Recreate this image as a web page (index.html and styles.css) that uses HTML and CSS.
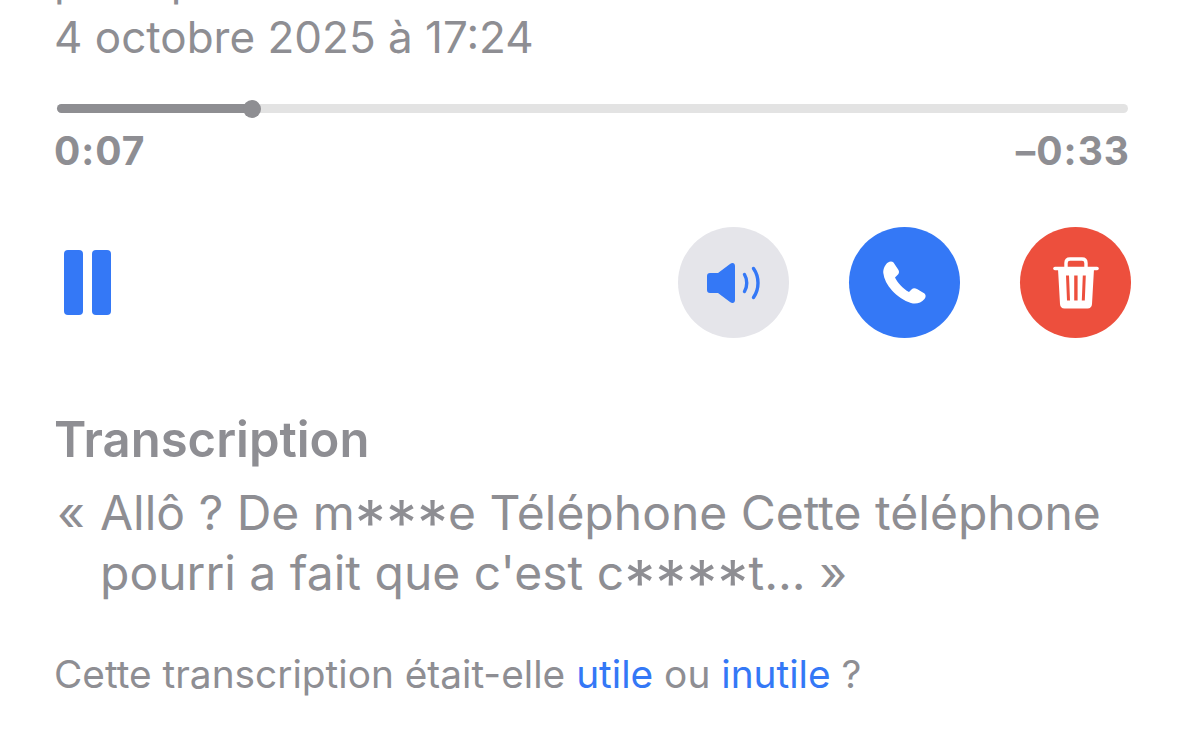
FILE: index.html
```html
<!DOCTYPE html>
<html lang="fr">
<head>
    <meta charset="UTF-8">
    <meta name="viewport" content="width=device-width, initial-scale=1.0">
    <title>Message vocal</title>
    <link rel="stylesheet" href="styles.css">
</head>
<body>
    <div class="voicemail">
        <div class="top-line">principal</div>
        <div class="date">4 octobre 2025 à 17:24</div>

        <div class="scrubber">
            <div class="scrubber-fill"></div>
            <div class="scrubber-knob"></div>
        </div>
        <div class="times">
            <span>0:07</span>
            <span>–0:33</span>
        </div>

        <div class="controls">
            <div class="pause">
                <span class="pause-bar"></span>
                <span class="pause-bar"></span>
            </div>
            <div class="actions">
                <div class="round-btn btn-speaker">
                    <svg width="54" height="42" viewBox="0 0 54 42">
                        <path d="M3 11h8L23 2c2.500-1.800 5-1 5 2v34c0 3-2.500 3.800-5 2L11 31H3c-2 0-3-1-3-3V14c0-2 1-3 3-3z" fill="#3478f6"/>
                        <path d="M37.500 12.500c3 5 3 12 0 17" fill="none" stroke="#3478f6" stroke-width="3.400" stroke-linecap="round"/>
                        <path d="M46.500 6.500c6 8.500 6 20.500 0 29" fill="none" stroke="#3478f6" stroke-width="3.400" stroke-linecap="round"/>
                    </svg>
                </div>
                <div class="round-btn btn-call">
                    <svg width="44" height="44" viewBox="0 0 44 44">
                        <path d="M5 1.500C7 0 9 0 10.500 1.500L15.500 9C16.500 11 16 13 14 14.500L12 16.500C14 21 20 28 26 31L28.500 28.500C30 27 32 27 34 28L41.500 32.500C43 34 43 36 41.500 38C38 42 33 43.500 28 42C21 40 14 35 9 29.500C4 24 1 18 .3 12C0 8 2 3.500 5 1.500Z" fill="#fff"/>
                    </svg>
                </div>
                <div class="round-btn btn-delete">
                    <svg width="46" height="52" viewBox="0 0 46 52">
                        <path d="M13 10V6c0-2.500 1.500-4 4-4h12c2.500 0 4 1.500 4 4v4" fill="none" stroke="#fff" stroke-width="3.400"/>
                        <path d="M2 11.500h42" stroke="#fff" stroke-width="3.600" stroke-linecap="round"/>
                        <path fill-rule="evenodd" d="M5 12h36l-2 35c-.2 2.800-1.700 4.500-4.500 4.500h-23C8.700 51.500 7.200 49.800 7 47zM13 18.500l1 25h3l-1-25zM21.200 18.500v25h3.400v-25zM29.800 18.500l-1 25h3l1-25z" fill="#fff"/>
                    </svg>
                </div>
            </div>
        </div>

        <h2 class="transcript-title">Transcription</h2>
        <p class="transcript">
            <span class="quote-mark">«</span>Allô ? De m<span class="stars">***</span>e Téléphone Cette téléphone pourri a fait que c'est c<span class="stars">****</span>t... »
        </p>

        <p class="feedback">Cette transcription était-elle <a href="#">utile</a> ou <a href="#">inutile</a> ?</p>
    </div>
</body>
</html>
```

FILE: styles.css
```css
html, body {
    height: 100%;
    margin: 0;
    overflow: hidden;
}
body {
    background-color: #fff;
    font-family: Inter, "Liberation Sans", sans-serif;
    color: #8e8e93;
}
.voicemail {
    width: 1077px;
    margin-left: 54px;
}
/* line above the date, only its descenders are still in view */
.top-line {
    margin-top: -46px;
    font-size: 44px;
    line-height: 52px;
}
.date {
    margin-top: 5px;
    font-size: 44px;
    line-height: 52px;
}
.scrubber {
    position: relative;
    width: 1071px;
    height: 9px;
    margin-top: 41px;
    margin-left: 3px;
    background-color: #e3e3e3;
    border-radius: 5px;
}
.scrubber-fill {
    width: 196px;
    height: 100%;
    background-color: #8e8e92;
    border-radius: 5px;
}
.scrubber-knob {
    position: absolute;
    left: 186px;
    top: -4.500px;
    width: 18px;
    height: 18px;
    background-color: #8e8e92;
    border-radius: 50%;
}
.times {
    display: flex;
    justify-content: space-between;
    width: 1076px;
    margin-top: 16px;
    font-size: 39px;
    line-height: 44px;
    font-weight: 700;
    letter-spacing: 1px;
}
.controls {
    display: flex;
    justify-content: space-between;
    align-items: center;
    width: 1077px;
    margin-top: 54px;
    height: 111px;
}
.pause {
    display: flex;
    gap: 9px;
    margin-left: 10px;
}
.pause-bar {
    width: 19px;
    height: 65px;
    background-color: #3478f6;
    border-radius: 4px;
}
.actions {
    display: flex;
    gap: 60px;
}
.round-btn {
    display: flex;
    justify-content: center;
    align-items: center;
    width: 111px;
    height: 111px;
    border-radius: 50%;
}
.btn-speaker {
    background-color: #e5e5ea;
}
.btn-call {
    background-color: #3478f6;
}
.btn-delete {
    background-color: #ed4f3d;
}
.transcript-title {
    margin: 74px 0 0;
    font-size: 49px;
    line-height: 56px;
    font-weight: 600;
}
.transcript {
    margin: 15px 0 0;
    padding-left: 46px;
    font-size: 48px;
    line-height: 60px;
}
.quote-mark {
    display: inline-block;
    width: 46px;
    margin-left: -46px;
    padding-left: 3px;
    box-sizing: border-box;
}
/* the ascii star sits too high, so it is enlarged and dropped to x-height */
.stars {
    font-size: 62px;
    line-height: 0;
    vertical-align: -0.24em;
}
.feedback {
    margin: 49px 0 0;
    font-size: 38.8px;
    line-height: 44px;
}
.feedback a {
    color: #3478f6;
    text-decoration: none;
}
```
